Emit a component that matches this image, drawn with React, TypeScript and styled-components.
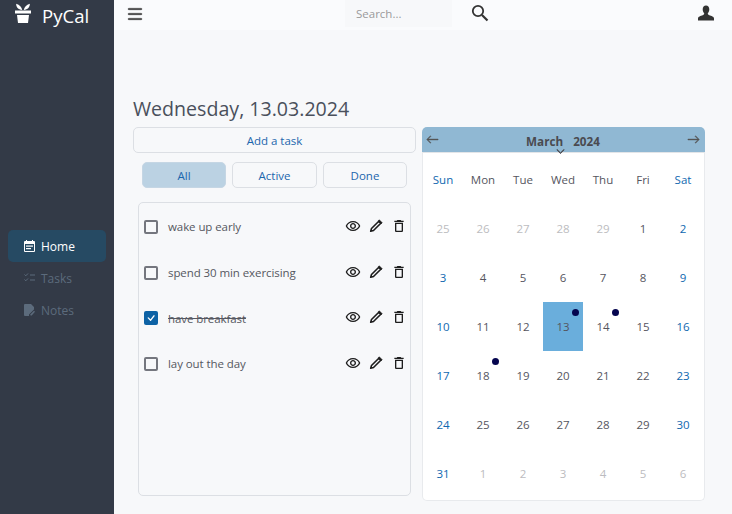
import React from "react";
import styled, { createGlobalStyle } from "styled-components";
import { BsList, BsArrowLeft, BsArrowRight, BsChevronDown, BsCheck } from "react-icons/bs";
import { MdOutlineRemoveRedEye, MdOutlineDelete } from "react-icons/md";

const GlobalStyle = createGlobalStyle`
	* { box-sizing: border-box; }
	html, body { margin: 0; padding: 0; height: 100%; overflow: hidden; }
	body { font-family: "Open Sans", "Noto Sans", "Liberation Sans", sans-serif; background: #f7f8fa; }
`
const Shell = styled.div`
	display: flex;
	width: 732px;
	height: 514px;
`
const Sidebar = styled.aside`
	width: 114px;
	flex-shrink: 0;
	background: #333a47;
	padding: 0 8px;
`
const Brand = styled.div`
	display: flex;
	align-items: center;
	height: 30px;
	gap: 11px;
	padding-left: 7px;
	color: #fff;
	font-size: 18.600px;
	& > svg { margin-top: -4px; }
`
const Nav = styled.nav`
	margin-top: 200px;
	display: flex;
	flex-direction: column;
`
const NavItem = styled.a<{ $active?: boolean }>`
	display: flex;
	align-items: center;
	gap: 6px;
	height: 32px;
	padding-left: 16px;
	border-radius: 5px;
	font-size: 12px;
	background: ${props => props.$active ? "#264a63" : "transparent"};
	color: ${props => props.$active ? "#fff" : "#5c6b7c"};
`
const Content = styled.div`
	flex: 1;
	display: flex;
	flex-direction: column;
	min-width: 0;
`
const Topbar = styled.header`
	height: 30px;
	background: #fafbfd;
	display: flex;
	align-items: center;
	padding: 0 18px 4px 11px;
	color: #4a4a4a;
`
const Burger = styled.span`
	display: flex;
	font-size: 20px;
	padding-top: 1px;
	& > svg { stroke: currentColor; stroke-width: 0.7; }
`
const SearchInput = styled.input`
	width: 107px;
	height: 28px;
	margin-left: 200px;
	padding: 0 11px;
	border: none;
	outline: none;
	font: 11.5px "Open Sans", sans-serif;
	background: #f7f8fa;
	&::placeholder { color: #9a9a9a; }
`
const SearchButton = styled.span`
	display: flex;
	margin-left: 19px;
	color: #333;
`
const UserButton = styled.span`
	display: flex;
	margin-left: auto;
	color: #333;
`
const Main = styled.main`
	display: grid;
	grid-template-columns: 283px 283px;
	column-gap: 6px;
	padding: 0 0 0 19px;
`
const Title = styled.h1`
	grid-column: 1 / 3;
	margin: 64px 0 3px;
	height: 30px;
	line-height: 30px;
	font-size: 19.6px;
	font-weight: 400;
	color: #4a505c;
`
const TaskColumn = styled.section`
	display: flex;
	flex-direction: column;
`
const AddButton = styled.button`
	height: 26px;
	padding: 0;
	background: transparent;
	border: 1px solid #dcdfe4;
	border-radius: 5px;
	font: 11.5px "Open Sans", sans-serif;
	color: #1c66ad;
`
const Filters = styled.div`
	display: grid;
	grid-template-columns: 84px 85px 84px;
	column-gap: 6px;
	padding: 9px 9px 14px;
`
const FilterButton = styled.button<{ $active?: boolean }>`
	height: 26px;
	padding: 0;
	border-radius: 5px;
	border: 1px solid ${props => props.$active ? "#c5d6e4" : "#dcdfe4"};
	background: ${props => props.$active ? "#bbd2e3" : "transparent"};
	font: 11.5px "Open Sans", sans-serif;
	color: #1c66ad;
`
const TaskList = styled.ul`
	list-style: none;
	margin: 0 5px 0 5px;
	padding: 1px 0 0;
	height: 294px;
	border: 1px solid #dcdfe4;
	border-radius: 5px;
`
const TaskRow = styled.li`
	display: flex;
	align-items: center;
	height: 45.7px;
	padding: 0 0 0 5px;
	font-size: 11.5px;
	letter-spacing: -0.08px;
	color: #555760;
`
const Box = styled.span<{ $checked?: boolean }>`
	display: flex;
	align-items: center;
	justify-content: center;
	width: 14px;
	height: 14px;
	margin-right: 10px;
	border-radius: 2px;
	border: ${props => props.$checked ? "none" : "2px solid #74767e"};
	background: ${props => props.$checked ? "#0d62a5" : "transparent"};
	color: #fff;
	font-size: 16px;
`
const TaskText = styled.span<{ $done?: boolean }>`
	flex: 1;
	text-decoration: ${props => props.$done ? "line-through" : "none"};
`
const TaskActions = styled.span`
	display: grid;
	grid-template-columns: 23px 23px 23px;
	justify-items: center;
	align-items: center;
	margin-top: -2px;
	color: #1d1d1d;
	font-size: 16px;
	& > svg { display: block; }
`
const Calendar = styled.section`
	display: flex;
	flex-direction: column;
	height: 374px;
`
const CalendarHeader = styled.div`
	position: relative;
	display: flex;
	align-items: center;
	justify-content: space-between;
	height: 25px;
	padding: 0 5px 0 4px;
	background: #90b8d3;
	border-radius: 5px 5px 0 0;
	color: #555;
	font-size: 13px;
	& > svg { stroke: currentColor; stroke-width: 0.6; }
`
const MonthLabel = styled.span`
	position: relative;
	display: flex;
	gap: 10px;
	padding-top: 2px;
	font-size: 11.7px;
	font-weight: 700;
	color: #4a4a50;
`
const MonthCaret = styled.span`
	position: absolute;
	left: 30px;
	top: 16px;
	display: flex;
	font-size: 9px;
	color: #44444a;
	& > svg { stroke: currentColor; stroke-width: 1.2; }
`
const CalendarBody = styled.div`
	flex: 1;
	display: grid;
	grid-template-columns: repeat(7, 40px);
	grid-auto-rows: 49px;
	padding: 2px 0 0;
	background: #fff;
	border: 1px solid #e8eaed;
	border-top-color: #e3e5e8;
	border-radius: 0 0 5px 5px;
`
const Cell = styled.div<{ $tone: "head" | "weekend" | "day" | "muted"; $selected?: boolean }>`
	position: relative;
	display: flex;
	align-items: center;
	justify-content: center;
	font-size: 11.5px;
	background: ${props => props.$selected ? "#6aaedc" : "transparent"};
	color: ${props => props.$tone === "weekend" ? "#0f68b0" : props.$tone === "muted" ? "#bcbcc0" : "#55555e"};
`
const Dot = styled.span`
	position: absolute;
	top: 7px;
	right: 4px;
	width: 7px;
	height: 7px;
	border-radius: 50%;
	background: #05054f;
`

const PlantLogo = () => (
	<svg width="16" height="20" viewBox="0 0 16 20" fill="#fff">
		<path d="M7.200 7C6.800 4.400 4.600 2 1.200 0.800 1 4 3.200 6.800 7.200 7zM8.800 7C9.200 4.400 11.400 2 14.800 0.800 15 4 12.800 6.800 8.800 7z" />
		<rect x="0" y="7.500" width="16" height="3" />
		<path d="M2 12h12l-1 8H3z" />
	</svg>
)
const SearchGlyph = () => (
	<svg width="18" height="18" viewBox="0 0 18 18" fill="none" stroke="currentColor">
		<circle cx="7" cy="7" r="5.200" strokeWidth="1.800" />
		<path d="M11 11l5.500 5.500" strokeWidth="2.200" />
	</svg>
)
const UserGlyph = () => (
	<svg width="16" height="16" viewBox="0 0 16 16" fill="currentColor">
		<path d="M8 0.500c2 0 3.300 1.500 3.300 3.700 0 1.700-.6 3.200-1.500 4 0 1 .4 1.500 1.500 2 2 .8 4.700 1.300 4.700 3.300V15.500H0V13.500c0-2 2.700-2.500 4.700-3.300 1.100-.5 1.500-1 1.500-2-.9-.8-1.500-2.300-1.500-4C4.700 2 6 .5 8 .5z" />
	</svg>
)
const PencilGlyph = () => (
	<svg width="16" height="16" viewBox="0 0 16 16" fill="none" stroke="currentColor">
		<path d="M3.500 10.500l7.300-7.300 2 2-7.300 7.300-2.800.8z" strokeWidth="1.600" strokeLinejoin="round" />
		<path d="M11.300 1.700l3 3-1.200 1.200-3-3z" fill="currentColor" strokeWidth="0.400" />
	</svg>
)
const HomeGlyph = () => (
	<svg width="11" height="12" viewBox="0 0 11 12" fill="#fff">
		<path d="M2 0h1v1h5V0h1v1h1a1 1 0 0 1 1 1v9a1 1 0 0 1-1 1H1a1 1 0 0 1-1-1V2a1 1 0 0 1 1-1h1zM1 4v7h9V4z" />
		<rect x="2" y="5.500" width="7" height="1.200" />
		<rect x="2" y="8" width="5" height="1.200" />
	</svg>
)
const TasksGlyph = () => (
	<svg width="11" height="12" viewBox="0 0 11 12" fill="none" stroke="currentColor" strokeWidth="1">
		<path d="M0.500 2.500l1.300 1.300L4 1.500M0.500 7.500l1.300 1.300L4 6.500M6 3h5M6 8h5" />
	</svg>
)
const NoteGlyph = () => (
	<svg width="11" height="12" viewBox="0 0 11 12" fill="currentColor">
		<path d="M1 0h6l3 3v2.500L5 10.500V12H1a1 1 0 0 1-1-1V1a1 1 0 0 1 1-1z" />
		<path d="M6.500 11.500v-1.200l3.500-3.500 1 1-3.300 3.700z" />
	</svg>
)

const tasks = [
	{ label: "wake up early" },
	{ label: "spend 30 min exercising" },
	{ label: "have breakfast", done: true },
	{ label: "lay out the day" },
]
const weekdays = ["Sun", "Mon", "Tue", "Wed", "Thu", "Fri", "Sat"]
// february tail, then march, then april head
const days = [
	...[25, 26, 27, 28, 29].map(day => ({ day, muted: true })),
	...Array.from({ length: 31 }, (_, i) => ({ day: i + 1, muted: false })),
	...[1, 2, 3, 4, 5, 6].map(day => ({ day, muted: true })),
]
const dotted = [13, 14, 18]

export default function App() {
	return (
		<Shell>
			<GlobalStyle />
			<Sidebar>
				<Brand><PlantLogo />PyCal</Brand>
				<Nav>
					<NavItem $active><HomeGlyph />Home</NavItem>
					<NavItem><TasksGlyph />Tasks</NavItem>
					<NavItem><NoteGlyph />Notes</NavItem>
				</Nav>
			</Sidebar>
			<Content>
				<Topbar>
					<Burger><BsList /></Burger>
					<SearchInput placeholder="Search..." />
					<SearchButton><SearchGlyph /></SearchButton>
					<UserButton><UserGlyph /></UserButton>
				</Topbar>
				<Main>
					<Title>Wednesday, 13.03.2024</Title>
					<TaskColumn>
						<AddButton>Add a task</AddButton>
						<Filters>
							<FilterButton $active>All</FilterButton>
							<FilterButton>Active</FilterButton>
							<FilterButton>Done</FilterButton>
						</Filters>
						<TaskList>
							{tasks.map(task => (
								<TaskRow key={task.label}>
									<Box $checked={task.done}>{task.done && <BsCheck />}</Box>
									<TaskText $done={task.done}>{task.label}</TaskText>
									<TaskActions>
										<MdOutlineRemoveRedEye />
										<PencilGlyph />
										<MdOutlineDelete />
									</TaskActions>
								</TaskRow>
							))}
						</TaskList>
					</TaskColumn>
					<Calendar>
						<CalendarHeader>
							<BsArrowLeft />
							<MonthLabel>
								<span>March</span>
								<span>2024</span>
								<MonthCaret><BsChevronDown /></MonthCaret>
							</MonthLabel>
							<BsArrowRight />
						</CalendarHeader>
						<CalendarBody>
							{weekdays.map((name, i) => (
								<Cell key={name} $tone={i === 0 || i === 6 ? "weekend" : "head"}>{name}</Cell>
							))}
							{days.map((item, i) => {
								const weekend = i % 7 === 0 || i % 7 === 6
								const tone = item.muted ? "muted" : weekend ? "weekend" : "day"
								return (
									<Cell key={i} $tone={tone} $selected={!item.muted && item.day === 13}>
										{item.day}
										{!item.muted && dotted.includes(item.day) && <Dot />}
									</Cell>
								)
							})}
						</CalendarBody>
					</Calendar>
				</Main>
			</Content>
		</Shell>
	)
}
